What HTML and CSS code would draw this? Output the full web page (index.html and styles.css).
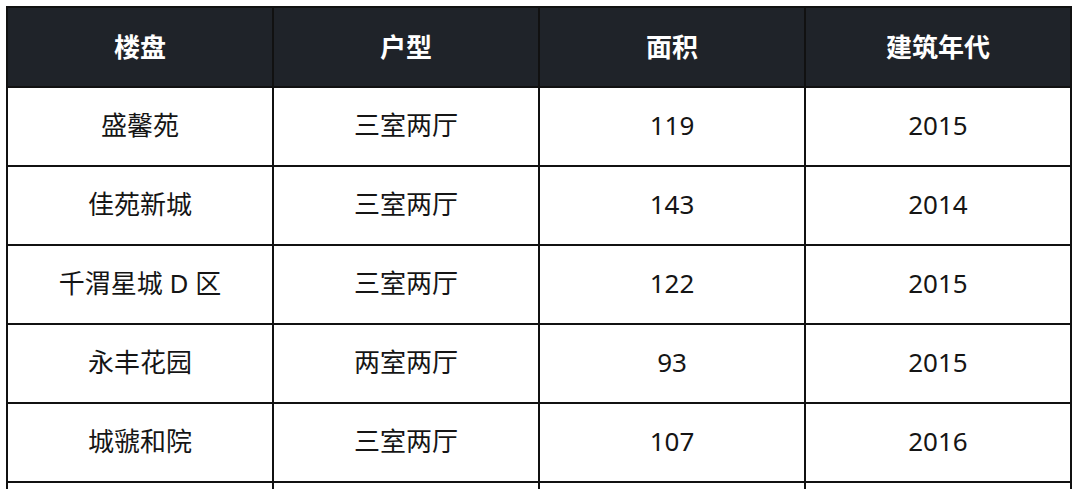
FILE: index.html
```html
<!DOCTYPE html>
<html lang="zh-CN">
<head>
<meta charset="utf-8">
<link rel="stylesheet" href="styles.css">
</head>
<body>
<div class="frame">
<table class="grid">
  <thead>
    <tr><th>楼盘</th><th>户型</th><th>面积</th><th>建筑年代</th></tr>
  </thead>
  <tbody>
    <tr><td>盛馨苑</td><td>三室两厅</td><td>119</td><td>2015</td></tr>
    <tr><td>佳苑新城</td><td>三室两厅</td><td>143</td><td>2014</td></tr>
    <tr><td>千渭星城 D 区</td><td>三室两厅</td><td>122</td><td>2015</td></tr>
    <tr><td>永丰花园</td><td>两室两厅</td><td>93</td><td>2015</td></tr>
    <tr><td>城虢和院</td><td>三室两厅</td><td>107</td><td>2016</td></tr>
    <tr><td>&nbsp;</td><td>&nbsp;</td><td>&nbsp;</td><td>&nbsp;</td></tr>
  </tbody>
</table>
</div>
</body>
</html>
```
FILE: styles.css
```css
html, body {
  margin: 0;
  padding: 0;
  background: #ffffff;
}
.frame {
  height: 489px;
  overflow: hidden;
}
body {
  font-family: "Noto Sans", "Noto Sans CJK SC", sans-serif;
  color: #151515;
}
.grid {
  margin: 6px 0 0 6px;
  width: 1066px;
  border-collapse: collapse;
  table-layout: fixed;
}
.grid th,
.grid td {
  border: 2px solid #111111;
  text-align: center;
  vertical-align: middle;
  padding: 0 0 3px 0;
  font-size: 26px;
  line-height: 1;
}
.grid th {
  background: #1f2329;
  color: #ffffff;
  font-weight: 700;
  height: 75px;
  font-family: "Noto Sans CJK SC", sans-serif;
}
.grid td {
  height: 74px;
  font-weight: 400;
}
```
